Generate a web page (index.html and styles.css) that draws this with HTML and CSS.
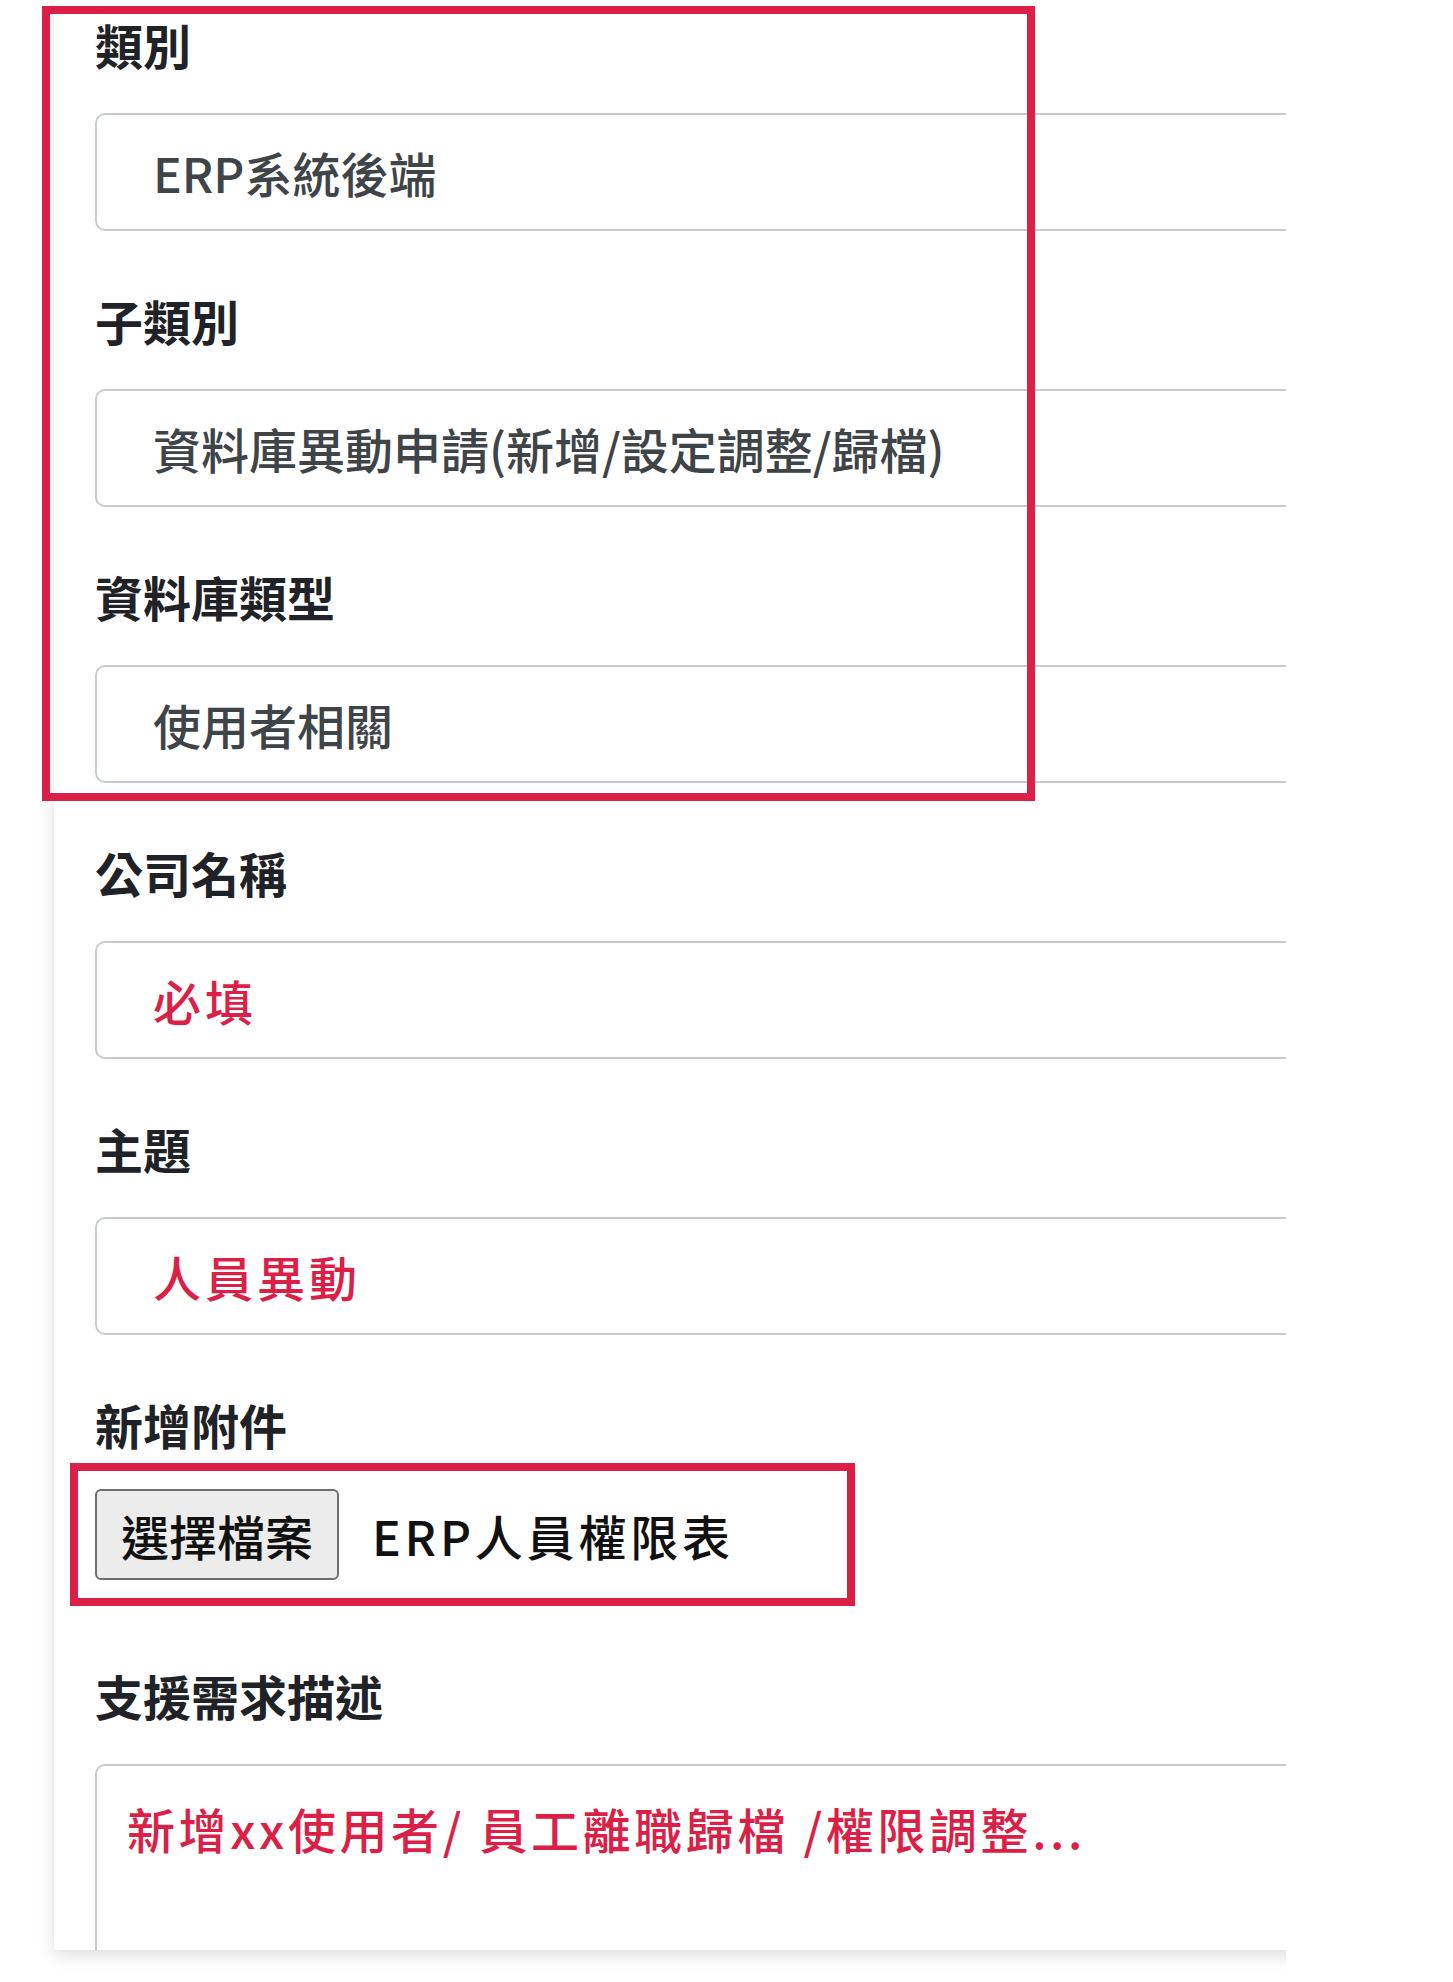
FILE: index.html
```html
<!DOCTYPE html>
<html lang="zh-Hant">
<head>
  <meta charset="UTF-8">
  <title>支援需求申請</title>
  <link rel="stylesheet" href="styles.css">
</head>
<body>

  <div class="shot">
    <form class="card">
      <div class="field">
        <label for="category">類別</label>
        <input type="text" id="category" class="box" value="ERP系統後端" readonly>
      </div>

      <div class="field">
        <label for="subCategory">子類別</label>
        <input type="text" id="subCategory" class="box" value="資料庫異動申請(新增/設定調整/歸檔)" readonly>
      </div>

      <div class="field">
        <label for="dbType">資料庫類型</label>
        <input type="text" id="dbType" class="box" value="使用者相關" readonly>
      </div>

      <div class="field">
        <label for="company">公司名稱</label>
        <input type="text" id="company" class="box note" value="必填">
      </div>

      <div class="field">
        <label for="subject">主題</label>
        <input type="text" id="subject" class="box note" value="人員異動">
      </div>

      <div class="field file-field">
        <label>新增附件</label>
        <div class="file-row">
          <button type="button" class="file-btn">選擇檔案</button>
          <span class="file-name">ERP人員權限表</span>
        </div>
      </div>

      <div class="field">
        <label for="desc">支援需求描述</label>
        <textarea id="desc" class="box area note">新增xx使用者/ 員工離職歸檔 /權限調整...</textarea>
      </div>
    </form>

    <!-- 標示框 -->
    <div class="mark mark-top"></div>
    <div class="mark mark-file"></div>
  </div>

</body>
</html>
```

FILE: styles.css
```css
body {
  margin: 0;
  background: #fff;
  font-family: "Noto Sans CJK TC", "Noto Sans", sans-serif;
}

.shot {
  position: relative;
  width: 1286px;
  height: 1975px;
  overflow: hidden;
}

.card {
  width: 1400px;
  height: 1950px;
  margin-left: 54px;
  padding: 15px 0 0 41px;
  box-sizing: border-box;
  background: #fff;
  box-shadow: 0 6px 16px rgba(0, 0, 0, 0.13);
  overflow: hidden;
}

.field + .field {
  margin-top: 60px;
}

label {
  display: block;
  margin-bottom: 40px;
  font-size: 48px;
  font-weight: 700;
  line-height: 58px;
  color: #1f2226;
}

.box {
  display: block;
  width: 1300px;
  height: 118px;
  box-sizing: border-box;
  padding: 0 0 0 56px;
  border: 2px solid #c6cbd1;
  border-radius: 10px;
  background: #fff;
  font-family: inherit;
  font-size: 48px;
  font-weight: 500;
  color: #3f4449;
  outline: none;
}

.note {
  color: #dc1f47;
  letter-spacing: 4px;
}

.file-field label {
  margin-bottom: 36px;
}

.file-row {
  display: flex;
  align-items: center;
}

.file-btn {
  height: 91px;
  padding: 0 24px;
  border: 2px solid #6e6e6e;
  border-radius: 6px;
  background: #ececec;
  font-family: inherit;
  font-size: 48px;
  font-weight: 500;
  color: #111;
}

.file-name {
  margin-left: 33px;
  font-size: 48px;
  font-weight: 500;
  letter-spacing: 3.8px;
  color: #111;
}

.file-field + .field {
  margin-top: 86px;
}

.area {
  height: 320px;
  padding: 33px 0 0 30px;
  line-height: 58px;
  letter-spacing: 3.6px;
  resize: none;
}

.mark {
  position: absolute;
  border: 8px solid #dc1f47;
  box-sizing: border-box;
}

.mark-top {
  left: 42px;
  top: 6px;
  width: 993px;
  height: 795px;
}

.mark-file {
  left: 70px;
  top: 1463px;
  width: 785px;
  height: 143px;
}
```
